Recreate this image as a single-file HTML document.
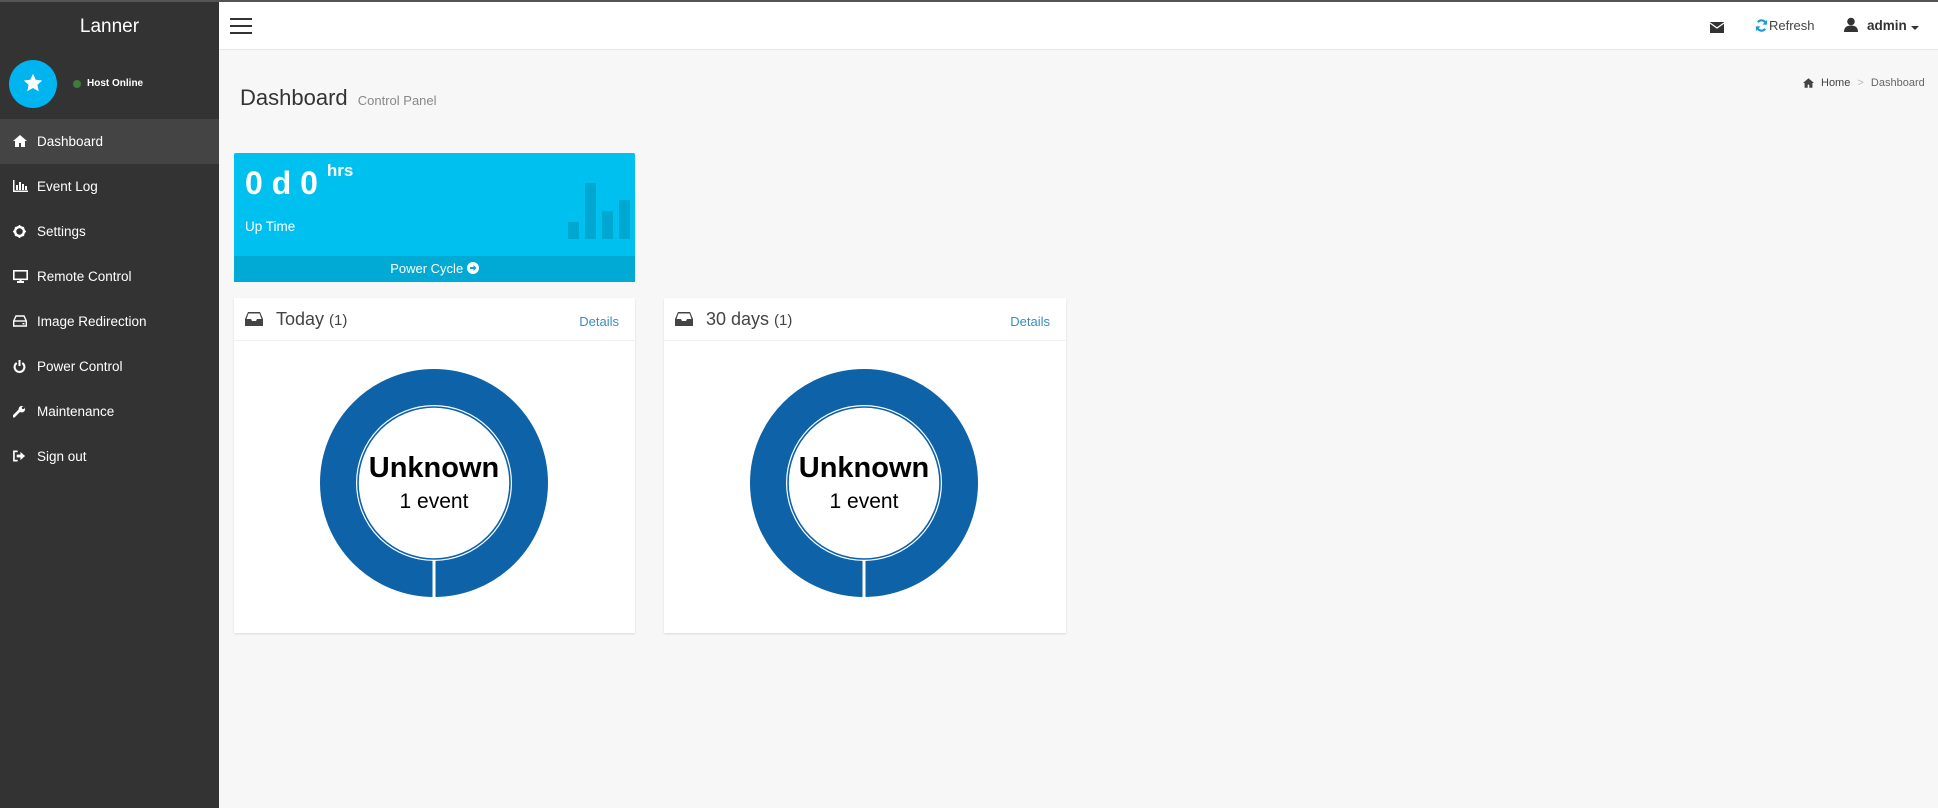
<!DOCTYPE html>
<html><head><meta charset="utf-8"><style>
*{margin:0;padding:0;box-sizing:border-box}
body{width:1938px;height:808px;overflow:hidden;background:#f7f7f7;font-family:"Liberation Sans",sans-serif;position:relative}
.abs{position:absolute}
#top{left:0;top:0;width:1938px;height:2px;background:#555}
#side{left:0;top:2px;width:219px;height:806px;background:#333}
#hdr{left:219px;top:2px;width:1719px;height:48px;background:#fff;border-bottom:1px solid #e8e8e8}
.mi{position:absolute;left:0;width:219px;height:45px;color:#fff;font-size:13.5px;line-height:45px;padding-left:37px}
.mi svg{position:absolute;left:13px;top:16px}
.card{background:#fff;box-shadow:0 1px 2px rgba(0,0,0,.12)}
.ch{position:absolute;left:0;top:0;right:0;height:43px;border-bottom:1px solid #f0f0f0}
.ct{position:absolute;left:42px;top:11px;font-size:18px;color:#444}
.det{position:absolute;right:16px;top:16px;font-size:13px;color:#3c8dbc}
.dn{position:absolute;left:86px;top:71px}
</style></head><body>
<div id="top" class="abs"></div>
<div id="side" class="abs">
 <div class="abs" style="left:0;top:14px;width:219px;text-align:center;color:#fff;font-size:19px">Lanner</div>
 <div class="abs" style="left:9px;top:58px;width:48px;height:48px;border-radius:50%;background:#00b4ef"></div>
 <svg class="abs" style="left:22px;top:70px" width="22" height="22" viewBox="0 0 24 24"><path d="M12 2l3 6.5 7 .8-5.2 4.8 1.5 7L12 17.5 5.7 21l1.5-7L2 9.3l7-.8z" fill="#fff"/></svg>
 <div class="abs" style="left:73px;top:78px;width:8px;height:8px;border-radius:50%;background:#3c7d3c"></div>
 <div class="abs" style="left:87px;top:76px;color:#fff;font-size:10px;font-weight:bold">Host Online</div>
 <div class="mi" style="top:117px;background:#444">
  <svg width="14" height="12" viewBox="0 0 14 12"><path d="M7 0L0 6h2v6h4V8h2v4h4V6h2z" fill="#fff"/></svg>Dashboard</div>
 <div class="mi" style="top:162px"><svg width="15" height="12" viewBox="0 0 15 12"><path d="M0 0h1.5v10.5H15V12H0z M3 5h2v5H3z M6 2h2v8H6z M9 4h2v6H9z M12 6h2v4h-2z" fill="#fff"/></svg>Event Log</div>
 <div class="mi" style="top:207px"><svg width="13" height="13" viewBox="0 0 16 16"><circle cx="8" cy="8" r="5.5" fill="none" stroke="#fff" stroke-width="3"/><path d="M7 0h2v3H7zM7 13h2v3H7zM0 7h3v2H0zM13 7h3v2h-3zM2 3.4l1.4-1.4 2 2L4 5.4zM10.6 12l1.4-1.4 2 2-1.4 1.4zM2 12.6l2-2 1.4 1.4-2 2zM10.6 4l2-2 1.4 1.4-2 2z" fill="#fff"/></svg>Settings</div>
 <div class="mi" style="top:252px"><svg width="15" height="13" viewBox="0 0 15 13"><rect x="0.8" y="0.8" width="13.4" height="8.5" fill="none" stroke="#fff" stroke-width="1.6"/><rect x="4" y="11" width="7" height="2" fill="#fff"/><rect x="6.5" y="9" width="2" height="2" fill="#fff"/></svg>Remote Control</div>
 <div class="mi" style="top:297px"><svg width="14" height="12" viewBox="0 0 14 12"><path d="M3 1h8l2.3 5v5H.7V6z" fill="none" stroke="#fff" stroke-width="1.4"/><path d="M1 6h12" stroke="#fff" stroke-width="1.4"/><rect x="9.5" y="8" width="2" height="1.4" fill="#fff"/></svg>Image Redirection</div>
 <div class="mi" style="top:342px"><svg width="13" height="13" viewBox="0 0 14 14"><path d="M4 3.2A5.3 5.3 0 1 0 10 3.2" fill="none" stroke="#fff" stroke-width="2.2"/><path d="M7 0v6.5" stroke="#fff" stroke-width="2.2"/></svg>Power Control</div>
 <div class="mi" style="top:387px"><svg width="13" height="13" viewBox="0 0 14 14"><path d="M1 12l6-6" stroke="#fff" stroke-width="3" stroke-linecap="round"/><circle cx="9.5" cy="4.5" r="3.5" fill="#fff"/><circle cx="11" cy="3" r="1.5" fill="#333"/></svg>Maintenance</div>
 <div class="mi" style="top:432px"><svg width="13" height="12" viewBox="0 0 14 12"><path d="M5 1H1v10h4" fill="none" stroke="#fff" stroke-width="1.8"/><path d="M4 4.5h4V1.5L13 6l-5 4.5v-3H4z" fill="#fff"/></svg>Sign out</div>
</div>
<div id="hdr" class="abs">
 <div class="abs" style="left:11px;top:16px;width:22px;height:2px;background:#333"></div>
 <div class="abs" style="left:11px;top:23px;width:22px;height:2px;background:#333"></div>
 <div class="abs" style="left:11px;top:30px;width:22px;height:2px;background:#333"></div>
 <svg class="abs" style="left:1491px;top:20px" width="14" height="11" viewBox="0 0 14 11"><rect width="14" height="11" fill="#333"/><path d="M0 1l7 5 7-5" fill="none" stroke="#fff" stroke-width="1.3"/></svg>
 <svg class="abs" style="left:1536px;top:17px" width="13" height="13" viewBox="0 0 14 14"><path d="M12 6A5 5 0 0 0 3 3.5M2 8a5 5 0 0 0 9 2.5" fill="none" stroke="#1e9ad6" stroke-width="2.3"/><path d="M13 1v5H8zM1 13V8h5z" fill="#1e9ad6"/></svg>
 <div class="abs" style="left:1550px;top:16px;font-size:13px;color:#444">Refresh</div>
 <svg class="abs" style="left:1625px;top:15px" width="14" height="15" viewBox="0 0 14 15"><circle cx="7" cy="4.5" r="3.8" fill="#333"/><path d="M0 15c0-5 3-6.5 7-6.5s7 1.5 7 6.5z" fill="#333"/></svg>
 <div class="abs" style="left:1648px;top:16px;font-size:13.5px;font-weight:bold;color:#333">admin</div>
 <div class="abs" style="left:1692px;top:24px;border-left:4px solid transparent;border-right:4px solid transparent;border-top:4px solid #333"></div>
</div>
<div class="abs" style="left:240px;top:85px;font-size:22px;color:#333">Dashboard <span style="font-size:13px;color:#888;margin-left:4px">Control Panel</span></div>
<svg class="abs" style="left:1803px;top:78px" width="11" height="10" viewBox="0 0 14 12"><path d="M7 0L0 6h2v6h4V8h2v4h4V6h2z" fill="#444"/></svg>
<div class="abs" style="left:1821px;top:77px;font-size:11px;color:#444">Home <span style="color:#bbb;margin:0 4px">&gt;</span> <span style="color:#666">Dashboard</span></div>

<div class="abs" style="left:234px;top:153px;width:401px;height:129px;background:#00c0ef;border-radius:2px">
 <div class="abs" style="left:11px;top:12px;color:#fff;font-size:32px;font-weight:bold">0 d 0 <sup style="font-size:17px;position:relative;top:-4px;vertical-align:top">hrs</sup></div>
 <div class="abs" style="left:11px;top:66px;color:#fff;font-size:13.5px">Up Time</div>
 <div class="abs" style="left:334px;top:69px;width:11px;height:17px;background:#00a7d0"></div>
 <div class="abs" style="left:351px;top:30px;width:11px;height:56px;background:#00a7d0"></div>
 <div class="abs" style="left:368px;top:58px;width:11px;height:28px;background:#00a7d0"></div>
 <div class="abs" style="left:385px;top:47px;width:11px;height:39px;background:#00a7d0"></div>
 <div class="abs" style="left:0;top:103px;width:401px;height:26px;background:#00aad5;color:#fff;font-size:13px;text-align:center;line-height:26px">Power Cycle <svg width="12" height="12" viewBox="0 0 12 12" style="vertical-align:-1px"><circle cx="6" cy="6" r="6" fill="#fff"/><path d="M3 5h3.5V3L9.5 6 6.5 9V7H3z" fill="#00aad5"/></svg></div>
</div>

<div class="abs card" style="left:234px;top:298px;width:401px;height:335px">
 <div class="ch"><svg class="abs" style="left:11px;top:14px" width="18" height="14" viewBox="0 0 18 14"><path d="M3 0h12l3 7v7H0V7z" fill="#444"/><path d="M3.5 1.5h11L16.5 7H12l-1 2H7L6 7H1.5z" fill="#fff"/></svg><div class="ct">Today <span style="font-size:15px">(1)</span></div><div class="det">Details</div></div>
 <svg class="dn" width="228" height="228" viewBox="0 0 228 228"><circle cx="114" cy="114" r="96" fill="none" stroke="#0e62a7" stroke-width="36"/><circle cx="114" cy="114" r="76" fill="none" stroke="#0e62a7" stroke-width="1.6"/><rect x="112.5" y="191" width="3" height="38" fill="#fff"/><text x="114" y="108" text-anchor="middle" font-family="Liberation Sans" font-weight="bold" font-size="29">Unknown</text><text x="114" y="139" text-anchor="middle" font-family="Liberation Sans" font-size="21">1 event</text></svg>
</div>

<div class="abs card" style="left:664px;top:298px;width:402px;height:335px">
 <div class="ch"><svg class="abs" style="left:11px;top:14px" width="18" height="14" viewBox="0 0 18 14"><path d="M3 0h12l3 7v7H0V7z" fill="#444"/><path d="M3.5 1.5h11L16.5 7H12l-1 2H7L6 7H1.5z" fill="#fff"/></svg><div class="ct">30 days <span style="font-size:15px">(1)</span></div><div class="det">Details</div></div>
 <svg class="dn" width="228" height="228" viewBox="0 0 228 228"><circle cx="114" cy="114" r="96" fill="none" stroke="#0e62a7" stroke-width="36"/><circle cx="114" cy="114" r="76" fill="none" stroke="#0e62a7" stroke-width="1.6"/><rect x="112.5" y="191" width="3" height="38" fill="#fff"/><text x="114" y="108" text-anchor="middle" font-family="Liberation Sans" font-weight="bold" font-size="29">Unknown</text><text x="114" y="139" text-anchor="middle" font-family="Liberation Sans" font-size="21">1 event</text></svg>
</div>
</body></html>
